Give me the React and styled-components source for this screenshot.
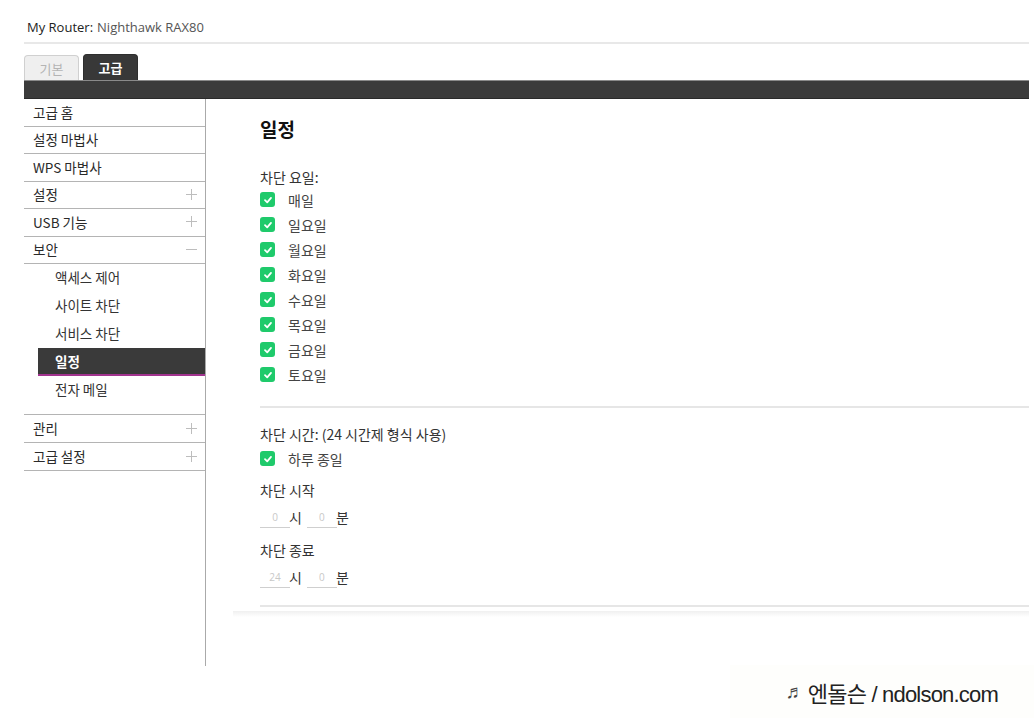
import React from 'react';
import styled, { createGlobalStyle } from 'styled-components';

const GlobalStyle = createGlobalStyle`
  html, body {
    margin: 0;
    padding: 0;
    background: #fff;
  }
  body {
    font-family: "Open Sans", "Noto Sans CJK KR", sans-serif;
    color: #333;
  }
`;

const Page = styled.div`
  position: relative;
  width: 1034px;
  height: 718px;
  overflow: hidden;
  padding: 0 5px 0 24px;
  box-sizing: border-box;
`;

const Header = styled.header`
  height: 44px;
  display: flex;
  align-items: flex-start;
  padding: 18px 3px 0;
  box-sizing: border-box;
  font-size: 13px;
  line-height: 18px;
  border-bottom: 2px solid #e8e8e8;

  strong {
    font-weight: 400;
    color: #222;
    margin-right: 4px;
  }
  span {
    color: #555;
  }
`;

const Tabs = styled.nav`
  display: flex;
  gap: 4px;
  margin-top: 10px;
  height: 26px;
  align-items: flex-end;
`;

const Tab = styled.div`
  width: 55px;
  height: ${(p) => (p.$active ? '26px' : '25px')};
  box-sizing: border-box;
  display: flex;
  align-items: center;
  justify-content: center;
  border-radius: 4px 4px 0 0;
  font-family: "Noto Sans CJK KR", sans-serif;
  font-size: 13px;
  background: ${(p) => (p.$active ? '#383838' : '#efefef')};
  color: ${(p) => (p.$active ? '#fff' : '#b4b4b4')};
  font-weight: ${(p) => (p.$active ? 700 : 400)};
  border: 1px solid ${(p) => (p.$active ? '#2e2e2e' : '#d0d0d0')};
  border-bottom: none;
`;

const DarkBar = styled.div`
  height: 19px;
  background: #3b3b3b;
  border-top: 1px solid #8a8a8a;
  border-bottom: 1px solid #2a2a2a;
  box-sizing: border-box;
`;

const Body = styled.div`
  display: flex;
  align-items: flex-start;
`;

const Sidebar = styled.aside`
  width: 182px;
  flex-shrink: 0;
  height: 567px;
  border-right: 1px solid #aaa;
  box-sizing: border-box;
  font-family: "Noto Sans CJK KR", sans-serif;
  font-size: 13.5px;
`;

const NavItem = styled.div`
  height: ${(p) => p.$h || 27.5}px;
  box-sizing: border-box;
  display: flex;
  align-items: center;
  justify-content: space-between;
  padding: 0 8px 1px 9px;
  border-bottom: 1px solid #b4b4b4;
  color: #2a2a2a;
`;

const SubGroup = styled.div`
  padding-bottom: 10px;
  border-bottom: 1px solid #b4b4b4;
`;

const SubItem = styled.div`
  height: 28px;
  box-sizing: border-box;
  display: flex;
  align-items: center;
  margin-left: 14px;
  padding-left: 17px;
  color: ${(p) => (p.$active ? '#fff' : '#333')};
  background: ${(p) => (p.$active ? '#3a3a3a' : 'transparent')};
  font-weight: ${(p) => (p.$active ? 700 : 400)};
  border-bottom: 2px solid ${(p) => (p.$active ? '#a2348f' : 'transparent')};
`;

const ToggleIcon = ({ minus }) => (
  <svg width="11" height="11" viewBox="0 0 11 11">
    <line x1="0" y1="5.5" x2="11" y2="5.5" stroke="#bdbdbd" strokeWidth="1" />
    {!minus && <line x1="5.5" y1="0" x2="5.5" y2="11" stroke="#bdbdbd" strokeWidth="1" />}
  </svg>
);

const Main = styled.main`
  flex: 1;
  padding: 18px 0 0 54px;
  font-family: "Noto Sans CJK KR", sans-serif;
  font-size: 14px;
  color: #333;
`;

const Title = styled.h1`
  margin: 0;
  font-size: 19px;
  line-height: 24px;
  font-weight: 700;
  color: #111;
`;

const Label = styled.div`
  line-height: 20px;
  margin-top: ${(p) => p.$mt || 0}px;
`;

const CheckRow = styled.label`
  display: flex;
  align-items: center;
  height: 25px;
  gap: 13px;
  color: #444;
  margin-top: ${(p) => p.$mt || 0}px;
`;

const Box = styled.span`
  width: 15px;
  height: 15px;
  border-radius: 3px;
  background: #1fca6b;
  display: inline-flex;
  align-items: center;
  justify-content: center;
`;

const Check = () => (
  <Box>
    <svg width="10" height="10" viewBox="0 0 10 10">
      <path d="M2 5.2 L4.2 7.3 L8 2.9" fill="none" stroke="#fff" strokeWidth="1.8" strokeLinecap="round" strokeLinejoin="round" />
    </svg>
  </Box>
);

const Divider = styled.hr`
  border: none;
  height: 2px;
  background: #e6e6e6;
  margin: ${(p) => p.$mt || 16}px 0 0;
`;

const TimeRow = styled.div`
  display: flex;
  align-items: center;
  height: 22px;
  margin-top: ${(p) => p.$mt || 6}px;
`;

const TimeInput = styled.input`
  width: 30px;
  height: 22px;
  box-sizing: border-box;
  border: none;
  border-bottom: 1px solid #cfcfcf;
  text-align: center;
  font-family: "Open Sans", sans-serif;
  font-size: 10px;
  color: #c8c8c8;
  padding: 0;
  outline: none;
  background: transparent;
`;

const Unit = styled.span`
  margin: 0 5px 0 -1px;
  color: #333;
`;

const PanelShadow = styled.div`
  height: 6px;
  margin: 4px 0 0 -27px;
  background: linear-gradient(#f0f0f0, #fff);
`;

const Watermark = styled.div`
  position: absolute;
  right: 0;
  bottom: 0;
  width: 304px;
  height: 53px;
  background: #fefefc;
  display: flex;
  align-items: center;
  justify-content: flex-end;
  padding-right: 36px;
  box-sizing: border-box;
  font-family: "Liberation Sans", "Noto Sans CJK KR", sans-serif;
  font-size: 22px;
  letter-spacing: -0.8px;
  color: #222;

  small {
    font-size: 19px;
    color: #444;
    margin-right: 4px;
  }
`;

const days = ['매일', '일요일', '월요일', '화요일', '수요일', '목요일', '금요일', '토요일'];

export default function App() {
  return (
    <>
      <GlobalStyle />
      <Page>
        <Header>
          <strong>My Router:</strong>
          <span>Nighthawk RAX80</span>
        </Header>
        <Tabs>
          <Tab>기본</Tab>
          <Tab $active>고급</Tab>
        </Tabs>
        <DarkBar />
        <Body>
          <Sidebar>
            <NavItem>고급 홈</NavItem>
            <NavItem>설정 마법사</NavItem>
            <NavItem>WPS 마법사</NavItem>
            <NavItem>설정<ToggleIcon /></NavItem>
            <NavItem>USB 기능<ToggleIcon /></NavItem>
            <NavItem>보안<ToggleIcon minus /></NavItem>
            <SubGroup>
              <SubItem>액세스 제어</SubItem>
              <SubItem>사이트 차단</SubItem>
              <SubItem>서비스 차단</SubItem>
              <SubItem $active>일정</SubItem>
              <SubItem>전자 메일</SubItem>
            </SubGroup>
            <NavItem $h={28}>관리<ToggleIcon /></NavItem>
            <NavItem $h={28}>고급 설정<ToggleIcon /></NavItem>
          </Sidebar>
          <Main>
            <Title>일정</Title>
            <Label $mt={26}>차단 요일:</Label>
            {days.map((d) => (
              <CheckRow key={d}>
                <Check />
                {d}
              </CheckRow>
            ))}
            <Divider $mt={19} />
            <Label $mt={16}>차단 시간: (24 시간제 형식 사용)</Label>
            <CheckRow $mt={2}>
              <Check />
              하루 종일
            </CheckRow>
            <Label $mt={9}>차단 시작</Label>
            <TimeRow>
              <TimeInput defaultValue="0" />
              <Unit>시</Unit>
              <TimeInput defaultValue="0" />
              <Unit>분</Unit>
            </TimeRow>
            <Label $mt={12}>차단 종료</Label>
            <TimeRow>
              <TimeInput defaultValue="24" />
              <Unit>시</Unit>
              <TimeInput defaultValue="0" />
              <Unit>분</Unit>
            </TimeRow>
            <Divider $mt={17} />
            <PanelShadow />
          </Main>
        </Body>
        <Watermark>
          <small>♬</small>엔돌슨 / ndolson.com
        </Watermark>
      </Page>
    </>
  );
}
